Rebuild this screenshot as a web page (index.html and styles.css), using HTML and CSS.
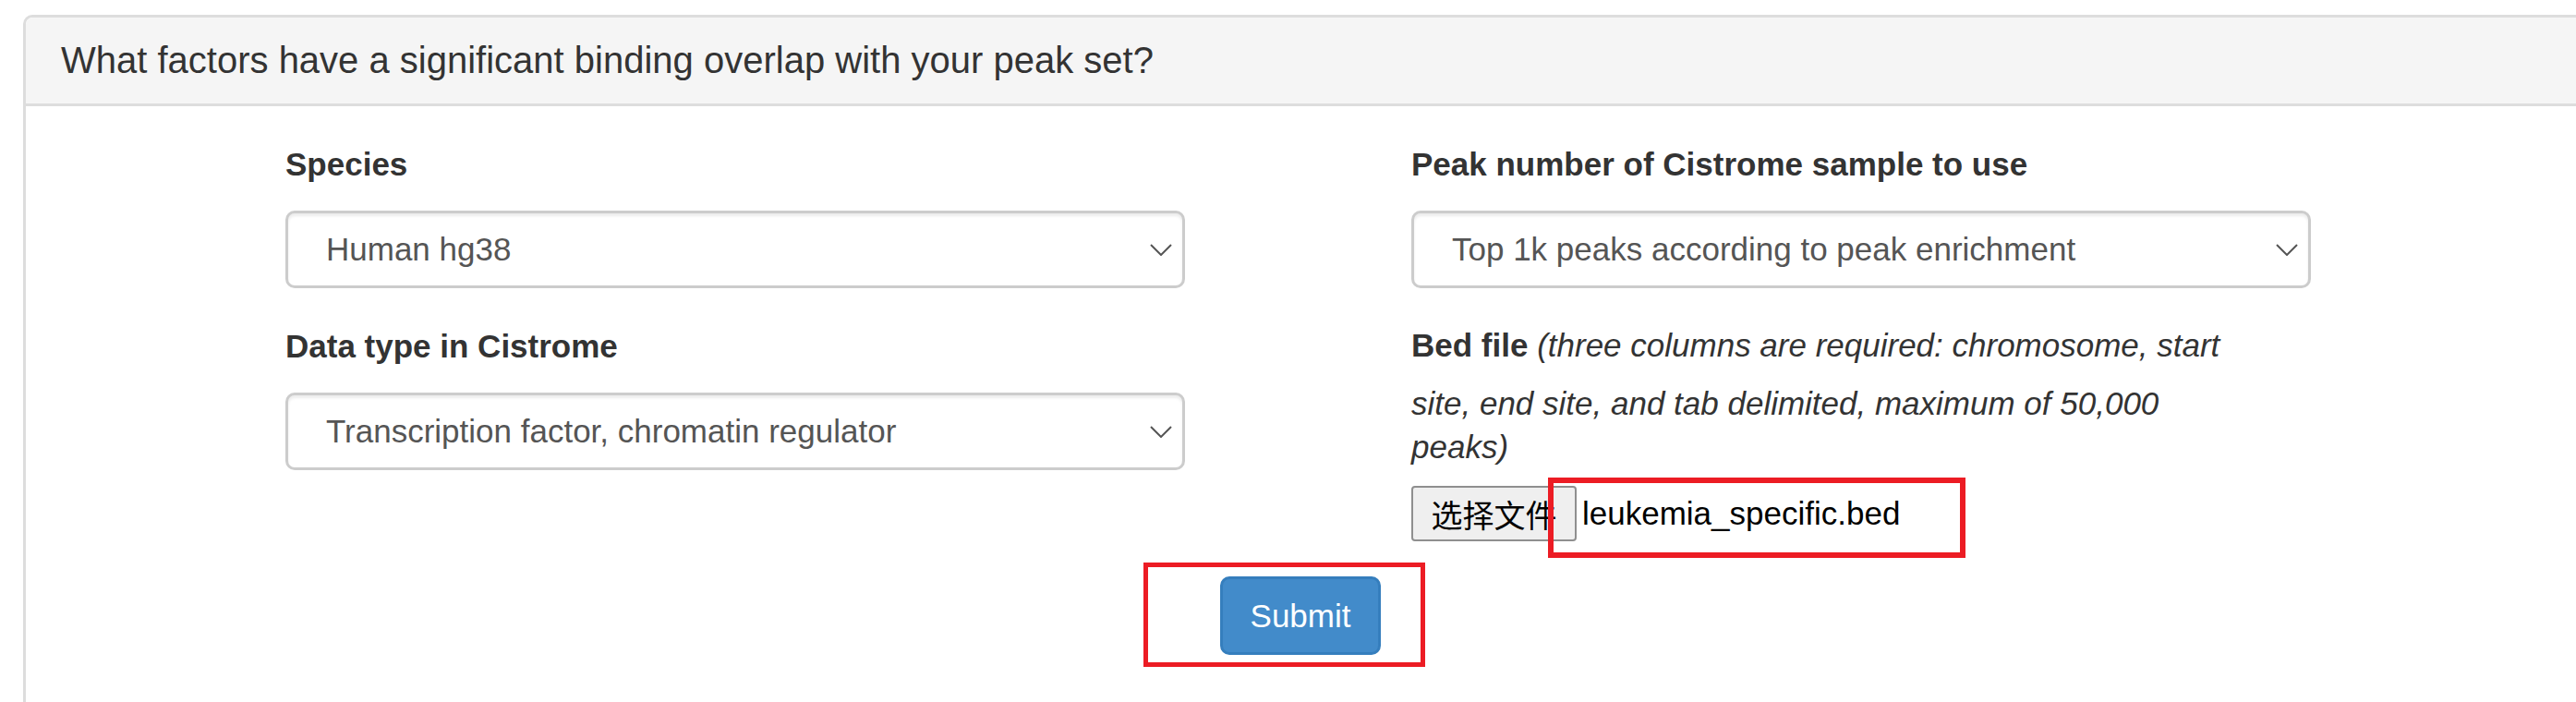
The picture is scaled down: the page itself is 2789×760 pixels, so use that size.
FILE: index.html
```html
<!DOCTYPE html>
<html lang="en">
<head>
<meta charset="utf-8">
<title>Cistrome factor overlap</title>
<link rel="stylesheet" href="styles.css">
</head>
<body>
<div class="page">
  <div class="panel">
    <div class="panel-heading">What factors have a significant binding overlap with your peak set?</div>
    <div class="panel-body">
      <div class="form-grid">
        <div class="form-group">
          <div class="label">Species</div>
          <div class="select">
            <span class="select-text">Human hg38</span>
            <svg class="chev" width="24" height="13" viewBox="0 0 24 13"><polyline points="1,1 12,12 23,1" fill="none" stroke="#555" stroke-width="2"/></svg>
          </div>
        </div>
        <div class="form-group">
          <div class="label">Peak number of Cistrome sample to use</div>
          <div class="select">
            <span class="select-text">Top 1k peaks according to peak enrichment</span>
            <svg class="chev" width="24" height="13" viewBox="0 0 24 13"><polyline points="1,1 12,12 23,1" fill="none" stroke="#555" stroke-width="2"/></svg>
          </div>
        </div>
        <div class="form-group">
          <div class="label">Data type in Cistrome</div>
          <div class="select">
            <span class="select-text">Transcription factor, chromatin regulator</span>
            <svg class="chev" width="24" height="13" viewBox="0 0 24 13"><polyline points="1,1 12,12 23,1" fill="none" stroke="#555" stroke-width="2"/></svg>
          </div>
        </div>
        <div class="form-group">
          <p class="bed-desc"><span class="strut"></span><b>Bed file</b> <i>(three columns are required: chromosome, start site, end site, and tab delimited, maximum of 50,000 peaks)</i></p>
          <div class="file-row">
            <span class="file-btn">选择文件</span>
            <span class="file-name">leukemia_specific.bed</span>
          </div>
        </div>
      </div>
      <div class="submit-row">
        <span class="btn-submit">Submit</span>
      </div>
    </div>
  </div>
  <div class="mark mark-file"></div>
  <div class="mark mark-submit"></div>
</div>
</body>
</html>
```

FILE: styles.css
```css
html, body {
  margin: 0;
  padding: 0;
  background: #ffffff;
}

.page {
  position: relative;
  width: 2789px;
  height: 760px;
  overflow: hidden;
  padding: 16px 0 0 25px;
  box-sizing: border-box;
  font-family: "Liberation Sans", Arial, sans-serif;
  color: #333333;
}

.panel {
  width: 2800px;
  height: 900px;
  border: 3px solid #dddddd;
  border-radius: 10px 0 0 0;
  background: #ffffff;
}

.panel-heading {
  height: 93px;
  line-height: 93px;
  padding: 0 38px;
  font-size: 40px;
  color: #333333;
  background: #f5f5f5;
  border-bottom: 3px solid #dddddd;
  border-radius: 8px 0 0 0;
  white-space: nowrap;
}

.panel-body {
  padding: 38px 0 0 281px;
}

.form-grid {
  display: grid;
  grid-template-columns: 974px 974px;
  column-gap: 245px;
  row-gap: 38px;
  align-items: start;
}

.label {
  font-size: 35px;
  font-weight: 700;
  line-height: 50px;
  height: 50px;
  margin-bottom: 25px;
  color: #333333;
  white-space: nowrap;
}

.select {
  height: 84px;
  box-sizing: border-box;
  border: 3px solid #cccccc;
  border-radius: 10px;
  box-shadow: inset 0 3px 3px rgba(0, 0, 0, 0.075);
  background: #ffffff;
  display: flex;
  align-items: center;
  justify-content: space-between;
  padding: 0 11px 0 41px;
}

.select-text {
  font-size: 35px;
  color: #555555;
  white-space: nowrap;
}

.chev {
  display: block;
  margin-top: 1px;
}

.bed-desc {
  margin: 0;
  max-width: 905px;
  font-size: 35px;
  line-height: 47px;
  color: #333333;
}

.strut {
  display: inline-block;
  width: 0;
  height: 63px;
  vertical-align: top;
}

.bed-desc b {
  font-weight: 700;
}

.bed-desc i {
  font-style: italic;
}

.file-row {
  display: flex;
  align-items: center;
  margin-top: 19px;
  height: 60px;
}

.file-btn {
  box-sizing: border-box;
  height: 60px;
  width: 179px;
  display: flex;
  align-items: center;
  justify-content: center;
  border: 2px solid #8f8f8f;
  border-radius: 4px;
  background: #efefef;
  font-family: "Noto Sans CJK SC", "Liberation Sans", sans-serif;
  font-size: 34px;
  color: #000000;
}

.file-name {
  margin-left: 6px;
  font-size: 35px;
  color: #000000;
  white-space: nowrap;
}

.submit-row {
  display: flex;
  justify-content: center;
  width: 2193px;
  margin-top: 38px;
  padding-left: 5px;
  box-sizing: border-box;
}

.btn-submit {
  box-sizing: border-box;
  width: 174px;
  height: 85px;
  display: flex;
  align-items: center;
  justify-content: center;
  background: #428bca;
  border: 3px solid #357ebd;
  border-radius: 10px;
  color: #ffffff;
  font-size: 35px;
}

.mark {
  position: absolute;
  box-sizing: border-box;
  border-style: solid;
  border-color: #ec1c24;
}

.mark-file {
  left: 1676px;
  top: 517px;
  width: 452px;
  height: 87px;
  border-width: 6px;
}

.mark-submit {
  left: 1238px;
  top: 609px;
  width: 305px;
  height: 113px;
  border-width: 5px;
}
```
